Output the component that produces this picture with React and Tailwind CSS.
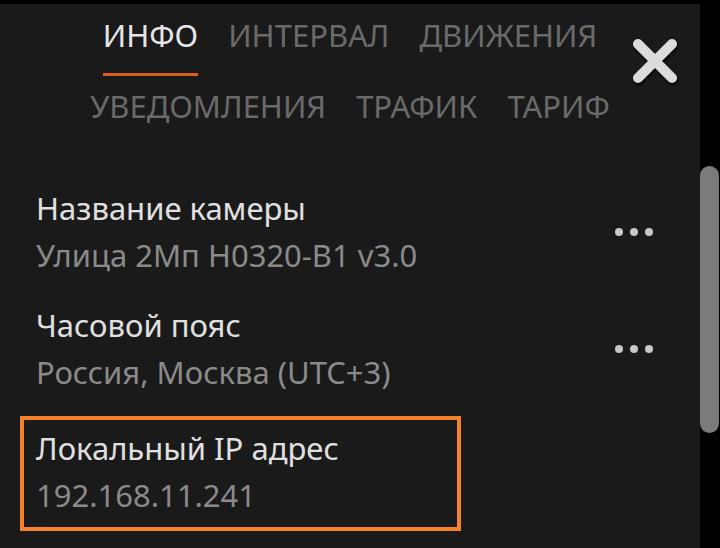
const font = { fontFamily: '"Noto Sans", "Open Sans", sans-serif' };

const tabRows = [
    ['ИНФО', 'ИНТЕРВАЛ', 'ДВИЖЕНИЯ'],
    ['УВЕДОМЛЕНИЯ', 'ТРАФИК', 'ТАРИФ'],
];

const fields = [
    { label: 'Название камеры', value: 'Улица 2Мп H0320-B1 v3.0', menu: true },
    { label: 'Часовой пояс', value: 'Россия, Москва (UTC+3)', menu: true },
    { label: 'Локальный IP адрес', value: '192.168.11.241', focused: true },
];

const Dots = () => (
    <div className="flex items-center gap-[7px] mr-[47px]">
        <span className="w-[8px] h-[8px] rounded-full bg-[#c8c8c8]" />
        <span className="w-[8px] h-[8px] rounded-full bg-[#c8c8c8]" />
        <span className="w-[8px] h-[8px] rounded-full bg-[#c8c8c8]" />
    </div>
);

const CloseIcon = () => (
    <svg width="48" height="48" viewBox="0 0 48 48" className="drop-shadow-[1px_2px_1px_rgba(0,0,0,0.8)]">
        <path d="M7 7 L41 41 M41 7 L7 41" stroke="#dcdcdc" strokeWidth="10" strokeLinecap="round" />
    </svg>
);

const Tabs = () => (
    <div className="relative pt-[11px]">
        {tabRows.map((row, i) => (
            <div key={i} className="flex justify-center gap-[30px] h-[71px]">
                {row.map((tab) => {
                    const active = tab === 'ИНФО';
                    return (
                        <div key={tab} className="flex flex-col items-stretch">
                            <span className={`text-[31px] leading-[40px] ${active ? 'text-[#e6e6e6]' : 'text-[#6a6a6a]'}`}>
                                {tab}
                            </span>
                            {active && <span className="mt-[18px] h-[3px] bg-[#d9601a]" />}
                        </div>
                    );
                })}
            </div>
        ))}
        <button className="absolute right-[21px] top-[33px]">
            <CloseIcon />
        </button>
    </div>
);

const Field = ({ label, value, menu, focused }) => (
    <div
        className={`flex items-center justify-between ${focused ? 'mt-[2px] mx-[20px] w-[441px] border-[4px] border-[#f5822a] pl-[12px] pt-[8px] pb-[12px]' : 'pl-[36px] pt-[8px] pb-[22px]'}`}
    >
        <div className="flex flex-col">
            <span className="text-[31px] leading-[40px] text-[#e0e0e0]">{label}</span>
            <span className="text-[31px] leading-[40px] mt-[7px] text-[#8a8a8a]">{value}</span>
        </div>
        {menu && <Dots />}
    </div>
);

export default function App() {
    return (
        <div className="flex w-[720px] h-[548px] bg-black overflow-hidden" style={font}>
            <div className="mt-[4px] w-[700px] h-[544px] bg-[#1a1a1a] flex flex-col">
                <Tabs />
                <div className="mt-[23px] flex flex-col">
                    {fields.map((f) => (
                        <Field key={f.label} {...f} />
                    ))}
                </div>
            </div>
            <div className="w-[20px] pt-[166px]">
                <div className="w-[19px] h-[267px] rounded-full bg-[#7b7b7b]" />
            </div>
        </div>
    );
}
